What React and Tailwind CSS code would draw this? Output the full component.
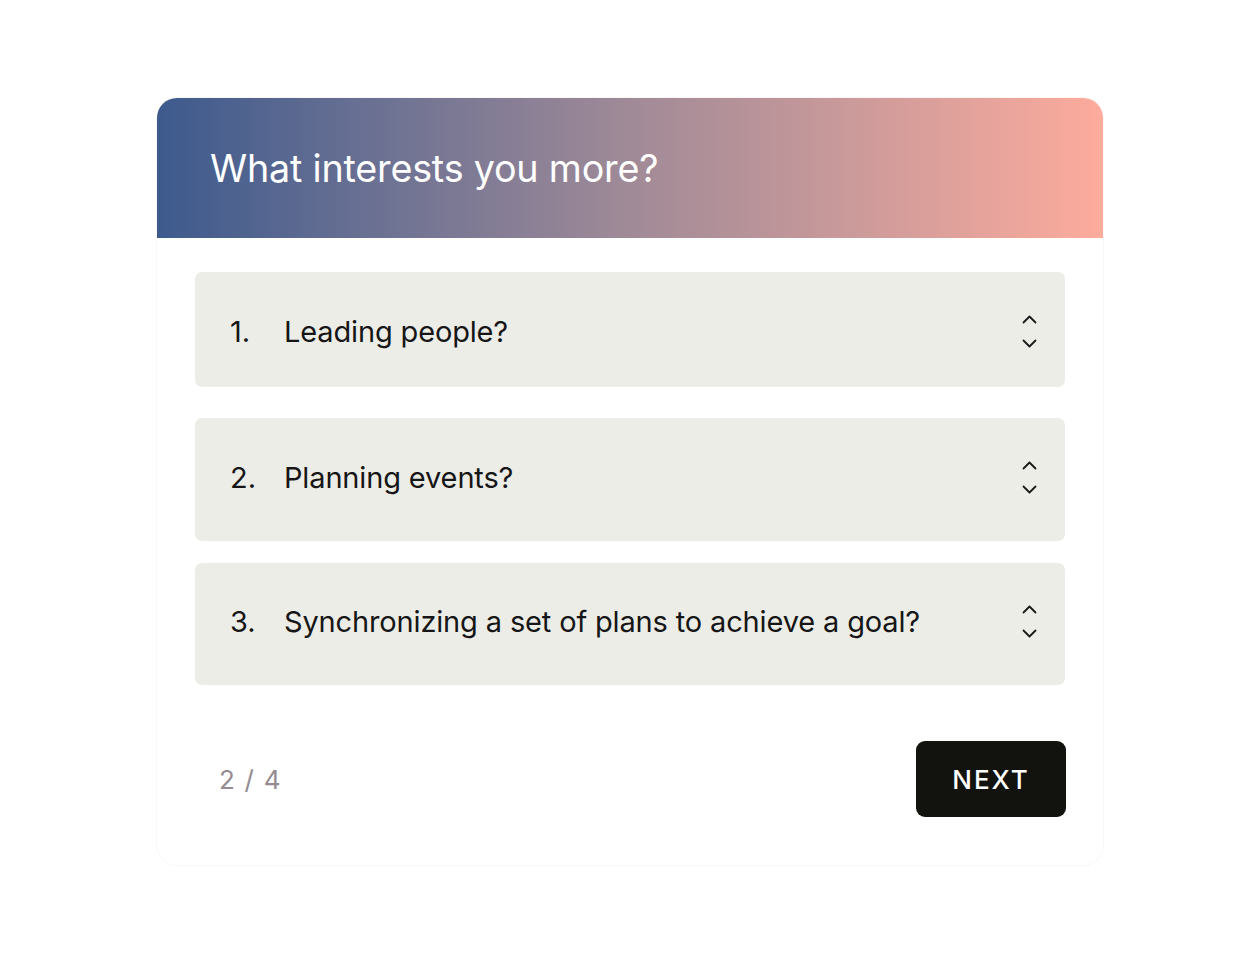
import React from 'react';

const options = [
  { n: '1.', label: 'Leading people?', h: 'h-[115px] pt-[3px]', mt: 'mt-[34px]' },
  { n: '2.', label: 'Planning events?', h: 'h-[123px] pb-[5px]', mt: 'mt-[31px]' },
  { n: '3.', label: 'Synchronizing a set of plans to achieve a goal?', h: 'h-[122px] pb-[5px]', mt: 'mt-[22px]' },
];

const Chevrons = () => (
  <div className="flex flex-col items-center gap-[15px]">
    <svg width="15" height="9" viewBox="0 0 15 9" fill="none">
      <path d="M1.5 7.5L7.5 1.5L13.5 7.5" stroke="#1a1a1a" strokeWidth="1.8" strokeLinecap="round" strokeLinejoin="round" />
    </svg>
    <svg width="15" height="9" viewBox="0 0 15 9" fill="none">
      <path d="M1.5 1.5L7.5 7.5L13.5 1.5" stroke="#1a1a1a" strokeWidth="1.8" strokeLinecap="round" strokeLinejoin="round" />
    </svg>
  </div>
);

export default function App() {
  return (
    <div className="min-h-[960px] w-[1260px] bg-white pt-[98px] pl-[157px]" style={{ fontFamily: 'Inter, "Open Sans", sans-serif' }}>
      <div className="w-[946px] h-[767px] rounded-[20px] bg-white shadow-[0_0_0_1px_#fbf7f7] overflow-hidden">
        <div className="h-[140px] flex items-center pl-[53px] bg-gradient-to-r from-[#3d5a8d] via-[#a08a97] to-[#fdab9c]">
          <h1 className="text-white text-[37.7px] tracking-[-0.2px] leading-none pt-[2px]">What interests you more?</h1>
        </div>

        <div className="px-[38px]">
          {options.map((o) => (
            <div key={o.n} className={`${o.h} ${o.mt} rounded-[7px] bg-[#edede8] flex items-center pl-[35px] pr-[28px]`}>
              <span className="w-[54px] text-[29px] text-[#161616] leading-none">{o.n}</span>
              <span className="flex-1 text-[29px] text-[#161616] leading-none tracking-[-0.15px]">{o.label}</span>
              <Chevrons />
            </div>
          ))}

          <div className="mt-[56px] flex items-center justify-between">
            <span className="pl-[24px] text-[26px] text-[#958b92] tracking-[1.2px]">2 / 4</span>
            <button className="w-[150px] h-[76px] mr-[-1px] rounded-[9px] bg-[#12120f] text-white text-[26px] tracking-[2px] font-medium">
              NEXT
            </button>
          </div>
        </div>
      </div>
    </div>
  );
}
